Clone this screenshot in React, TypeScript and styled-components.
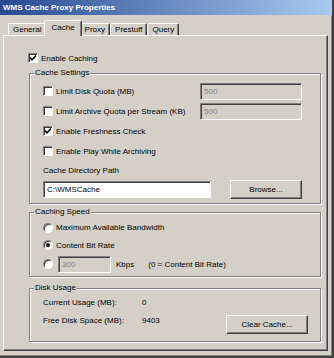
import React from 'react'
import styled, { createGlobalStyle } from 'styled-components'

const GlobalStyle = createGlobalStyle`
  html, body {
    margin: 0;
    padding: 0;
    background: #d4d0c8;
  }
  body {
    font-family: "Liberation Sans", Arial, sans-serif;
    font-size: 8px;
    color: #000;
  }
`

const Window = styled.div`
  width: 334px;
  height: 358px;
  box-sizing: border-box;
  display: flex;
  flex-direction: column;
  background: #d4d0c8;
  border-right: 2px solid #404040;
  border-bottom: 2px solid #404040;
  box-shadow: inset -1px -1px 0 #808080;
`

const TitleBar = styled.div`
  height: 15px;
  flex-shrink: 0;
  padding-left: 3px;
  line-height: 15px;
  font-weight: bold;
  font-size: 8px;
  color: #fff;
  background: linear-gradient(90deg, #274a92 0%, #a8caf0 100%);
`

const Body = styled.div`
  flex: 1;
  display: flex;
  flex-direction: column;
  padding: 5px 4px 5px 3px;
`

const TabStrip = styled.div`
  height: 15px;
  flex-shrink: 0;
  display: flex;
  align-items: flex-end;
  padding-left: 5px;
`

const Tab = styled.div<{ $active?: boolean }>`
  position: relative;
  z-index: ${p => (p.$active ? 2 : 1)};
  box-sizing: border-box;
  height: ${p => (p.$active ? '16px' : '12px')};
  margin: ${p => (p.$active ? '0 -2px -1px' : '0')};
  padding: ${p => (p.$active ? '2px 6px 0' : '1px 4px 0')};
  line-height: 10px;
  background: #d4d0c8;
  border: 1px solid #fff;
  border-right-color: #404040;
  border-bottom: none;
  border-radius: 2px 2px 0 0;
  box-shadow: inset -1px 0 0 #808080;
`

const Panel = styled.div`
  flex: 1;
  position: relative;
  z-index: 1;
  display: flex;
  flex-direction: column;
  padding: 15px 6px 0 24px;
  border: 1px solid;
  border-color: #fff #404040 #404040 #fff;
  box-shadow: inset -1px -1px 0 #808080;
`

const Row = styled.div<{ $h: number }>`
  height: ${p => p.$h}px;
  display: flex;
  align-items: center;
  justify-content: space-between;
`

const Line = styled.div`
  display: flex;
  align-items: center;
`

const Box = styled.span`
  width: 10px;
  height: 10px;
  box-sizing: border-box;
  flex-shrink: 0;
  display: flex;
  align-items: center;
  justify-content: center;
  background: #fff;
  border: 1px solid;
  border-color: #808080 #fff #fff #808080;
  box-shadow: inset 1px 1px 0 #404040;
  margin-right: 3px;
`

const RadioDot = styled.span<{ $on?: boolean }>`
  width: 10px;
  height: 10px;
  box-sizing: border-box;
  flex-shrink: 0;
  border-radius: 50%;
  background: #fff;
  border: 1px solid;
  border-color: #808080 #fff #fff #808080;
  box-shadow: inset 1px 1px 0 #404040;
  margin-right: 3px;
  display: flex;
  align-items: center;
  justify-content: center;
  &::after {
    content: '';
    width: 4px;
    height: 4px;
    border-radius: 50%;
    background: ${p => (p.$on ? '#000' : 'transparent')};
  }
`

const Text = styled.span<{ $ml?: number }>`
  margin-left: ${p => p.$ml ?? 0}px;
  white-space: nowrap;
`

const Field = styled.div<{ $w: number; $disabled?: boolean; $ml?: number }>`
  width: ${p => p.$w}px;
  height: 17px;
  box-sizing: border-box;
  margin-left: ${p => p.$ml ?? 0}px;
  padding-left: 3px;
  display: flex;
  align-items: center;
  background: ${p => (p.$disabled ? '#d4d0c8' : '#fff')};
  color: ${p => (p.$disabled ? '#808080' : '#000')};
  border: 1px solid;
  border-color: #808080 #fff #fff #808080;
  box-shadow: inset 1px 1px 0 #404040;
`

const Button = styled.div<{ $w: number }>`
  width: ${p => p.$w}px;
  height: 19px;
  box-sizing: border-box;
  display: flex;
  align-items: center;
  justify-content: center;
  background: #d4d0c8;
  border: 1px solid;
  border-color: #fff #404040 #404040 #fff;
  box-shadow: inset -1px -1px 0 #808080;
`

const Group = styled.div<{ $mt: number; $pt: number; $pb: number; $pr: number }>`
  position: relative;
  margin: ${p => p.$mt}px 0 0 1px;
  padding: ${p => `${p.$pt}px ${p.$pr}px ${p.$pb}px 13px`};
  border: 1px solid #808080;
  box-shadow: 1px 1px 0 #fff, inset 1px 1px 0 #fff;
`

const GroupTitle = styled.span`
  position: absolute;
  top: -6px;
  left: 4px;
  padding: 0 1px;
  line-height: 10px;
  background: #d4d0c8;
`

const UsageWrap = styled.div`
  display: flex;
  justify-content: space-between;
  align-items: flex-start;
`

const UsageGrid = styled.div`
  display: grid;
  grid-template-columns: 99px auto;
  grid-auto-rows: 18px;
  align-items: center;
`

const ClearButton = styled(Button)`
  margin-top: 22px;
`

const Check = ({ on }: { on?: boolean }) => (
  <Box>
    {on && (
      <svg width="8" height="8" viewBox="0 0 8 8">
        <path d="M1 3.5 L3 5.8 L7 1.5" stroke="#000" strokeWidth="1.6" fill="none" />
      </svg>
    )}
  </Box>
)

const CheckRow = ({ on, label }: { on?: boolean; label: string }) => (
  <Line>
    <Check on={on} />
    <Text>{label}</Text>
  </Line>
)

export default function App() {
  return (
    <>
      <GlobalStyle />
      <Window>
        <TitleBar>WMS Cache Proxy Properties</TitleBar>
        <Body>
          <TabStrip>
            <Tab>General</Tab>
            <Tab $active>Cache</Tab>
            <Tab>Proxy</Tab>
            <Tab>Prestuff</Tab>
            <Tab>Query</Tab>
          </TabStrip>
          <Panel>
            <Row $h={14}>
              <CheckRow on label="Enable Caching" />
            </Row>

            <Group $mt={8} $pt={7} $pb={4} $pr={18}>
              <GroupTitle>Cache Settings</GroupTitle>
              <Row $h={20}>
                <CheckRow label="Limit Disk Quota (MB)" />
                <Field $w={102} $disabled>500</Field>
              </Row>
              <Row $h={20}>
                <CheckRow label="Limit Archive Quota per Stream (KB)" />
                <Field $w={102} $disabled>500</Field>
              </Row>
              <Row $h={20}>
                <CheckRow on label="Enable Freshness Check" />
              </Row>
              <Row $h={20}>
                <CheckRow label="Enable Play While Archiving" />
              </Row>
              <Row $h={18}>
                <Text>Cache Directory Path</Text>
              </Row>
              <Row $h={20}>
                <Field $w={168}>C:\WMSCache</Field>
                <Button $w={72}>Browse...</Button>
              </Row>
            </Group>

            <Group $mt={8} $pt={6} $pb={2} $pr={18}>
              <GroupTitle>Caching Speed</GroupTitle>
              <Row $h={17}>
                <Line>
                  <RadioDot />
                  <Text>Maximum Available Bandwidth</Text>
                </Line>
              </Row>
              <Row $h={18}>
                <Line>
                  <RadioDot $on />
                  <Text>Content Bit Rate</Text>
                </Line>
              </Row>
              <Row $h={20}>
                <Line>
                  <RadioDot />
                  <Field $w={53} $ml={2} $disabled>300</Field>
                  <Text $ml={5}>Kbps</Text>
                  <Text $ml={14}>(0 = Content Bit Rate)</Text>
                </Line>
              </Row>
            </Group>

            <Group $mt={11} $pt={4} $pb={7} $pr={12}>
              <GroupTitle>Disk Usage</GroupTitle>
              <UsageWrap>
                <UsageGrid>
                  <Text>Current Usage (MB):</Text>
                  <Text>0</Text>
                  <Text>Free Disk Space (MB):</Text>
                  <Text>9403</Text>
                </UsageGrid>
                <ClearButton $w={82}>Clear Cache...</ClearButton>
              </UsageWrap>
            </Group>
          </Panel>
        </Body>
      </Window>
    </>
  )
}
